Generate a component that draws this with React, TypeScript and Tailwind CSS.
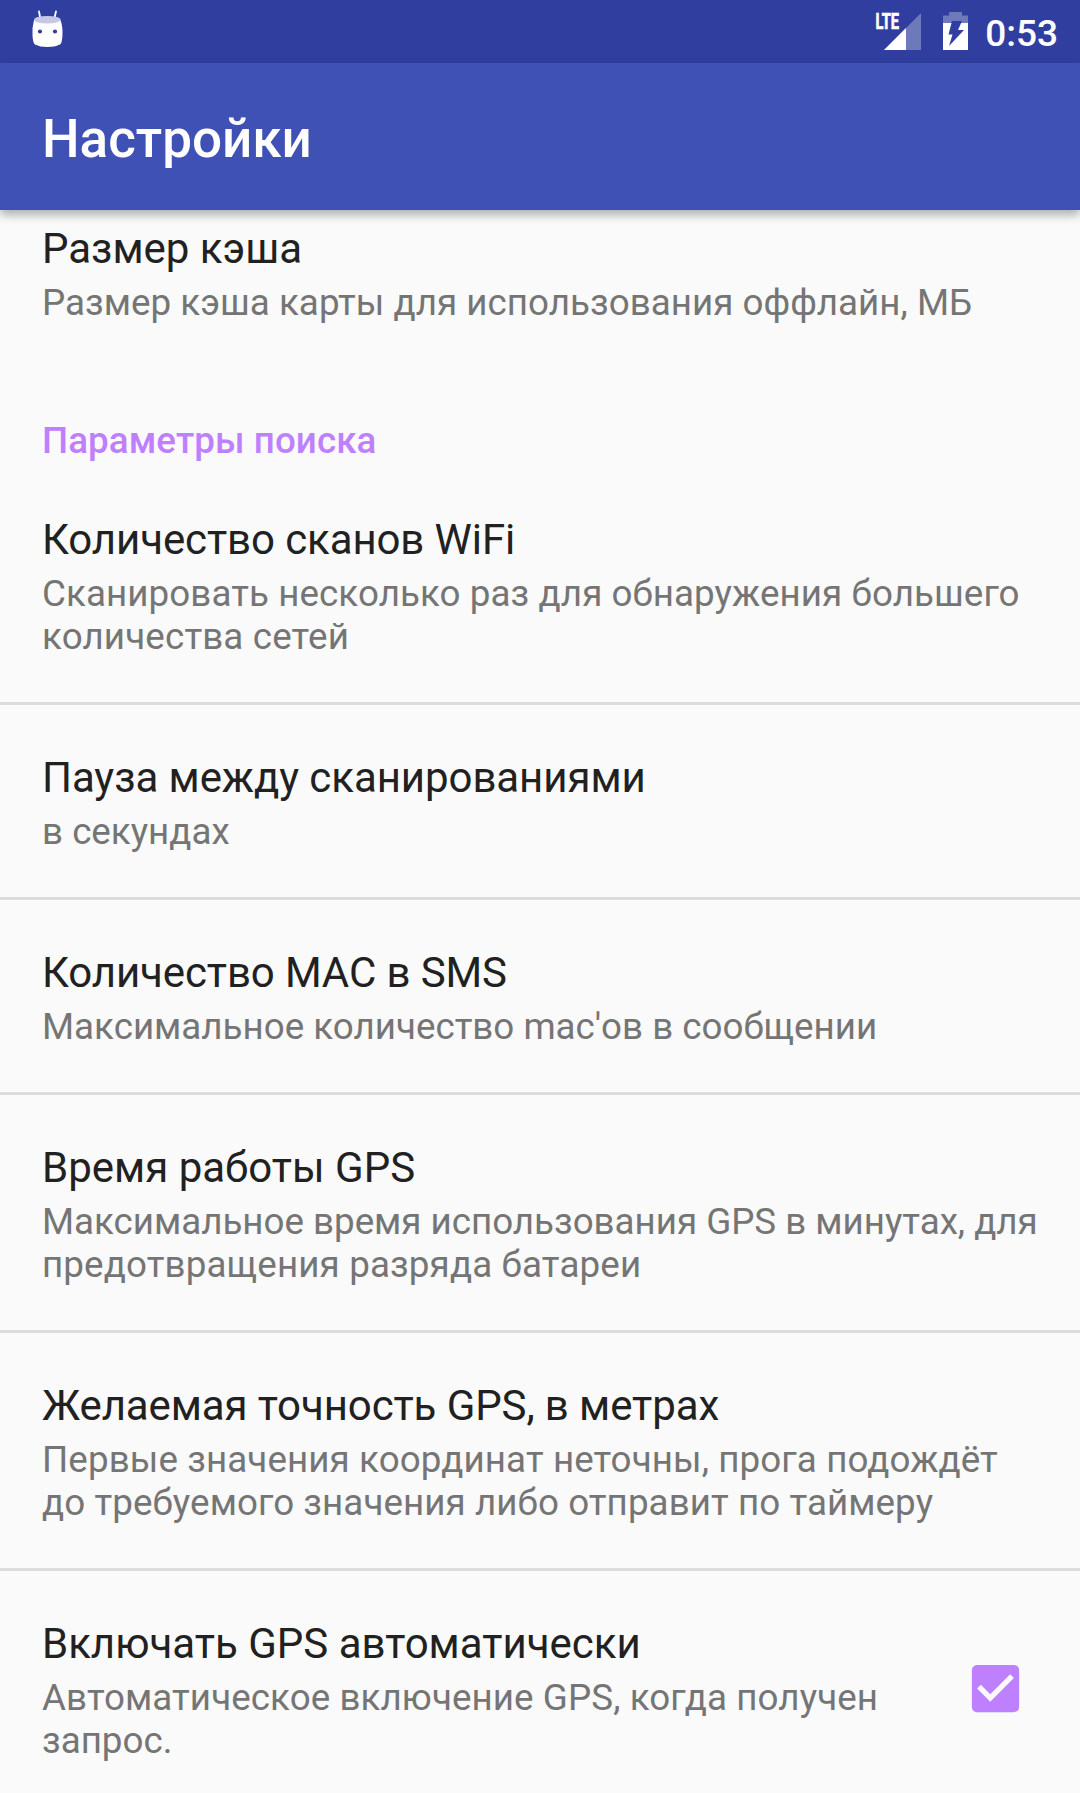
type Line = { text: string; tracking?: string };
type Pref = { title: Line; summary: Line[]; checked?: boolean };

const cachePref: Pref = {
  title: { text: "Размер кэша" },
  summary: [{ text: "Размер кэша карты для использования оффлайн, МБ", tracking: "tracking-[0.03px]" }],
};

const searchPrefs: Pref[] = [
  {
    title: { text: "Количество сканов WiFi", tracking: "tracking-[-0.1px]" },
    summary: [
      { text: "Сканировать несколько раз для обнаружения большего", tracking: "tracking-[0.08px]" },
      { text: "количества сетей", tracking: "tracking-[0.15px]" },
    ],
  },
  {
    title: { text: "Пауза между сканированиями", tracking: "tracking-[-0.07px]" },
    summary: [{ text: "в секундах" }],
  },
  {
    title: { text: "Количество MAC в SMS", tracking: "tracking-[-0.12px]" },
    summary: [{ text: "Максимальное количество mac'ов в сообщении" }],
  },
  {
    title: { text: "Время работы GPS" },
    summary: [
      { text: "Максимальное время использования GPS в минутах, для", tracking: "tracking-[-0.02px]" },
      { text: "предотвращения разряда батареи", tracking: "tracking-[0.13px]" },
    ],
  },
  {
    title: { text: "Желаемая точность GPS, в метрах", tracking: "tracking-[-0.1px]" },
    summary: [
      { text: "Первые значения координат неточны, прога подождёт", tracking: "tracking-[0.1px]" },
      { text: "до требуемого значения либо отправит по таймеру", tracking: "tracking-[0.07px]" },
    ],
  },
  {
    title: { text: "Включать GPS автоматически" },
    summary: [
      { text: "Автоматическое включение GPS, когда получен", tracking: "tracking-[0.08px]" },
      { text: "запрос." },
    ],
    checked: true,
  },
];

function PrefText({ pref }: { pref: Pref }) {
  return (
    <div className="flex flex-col gap-2 whitespace-nowrap">
      <h2 className="text-[42px] leading-[49px] text-[#212121]">
        <span className={pref.title.tracking}>{pref.title.text}</span>
      </h2>
      <div className="text-[36.75px] leading-[43px] text-[#757575]">
        {pref.summary.map((line) => (
          <p key={line.text} className={line.tracking}>
            {line.text}
          </p>
        ))}
      </div>
    </div>
  );
}

function Checkbox() {
  return (
    <svg className="mb-[5px] size-[63px] shrink-0" viewBox="0 0 24 24" fill="#bf80ff">
      <path d="M19 3H5c-1.11 0-2 .9-2 2v14c0 1.1.89 2 2 2h14c1.11 0 2-.9 2-2V5c0-1.1-.89-2-2-2zm-9 14l-5-5 1.41-1.41L10 14.17l7.59-7.59L19 8l-9 9z" />
    </svg>
  );
}

function StatusBar() {
  return (
    <div className="flex h-[63px] shrink-0 items-start bg-[#303f9f] text-white">
      <svg className="ml-[31px] mt-[10px] h-[38px] w-[33px]" viewBox="0 0 33 38" fill="#fff">
        <path d="M8 1.5 9.4 9M25 1.5 23.2 9" stroke="#fff" strokeWidth="1.8" strokeLinecap="round" />
        <path d="M3 10Q1 17 1.5 26Q2 33 4 34.5Q9 37 16.3 37Q24 37 29 34.5Q31 33 31.4 26Q32 17 29.5 10Z" />
        <ellipse cx="16.3" cy="9.8" rx="13.3" ry="3.8" fill="#c5c9e6" />
        <circle cx="9" cy="21.5" r="2.1" fill="#303f9f" />
        <circle cx="24" cy="21.5" r="2.1" fill="#303f9f" />
      </svg>
      <div className="grow" />
      <svg className="h-[50px] w-[49px]" viewBox="-2 -12 49 50">
        <path d="M46 1V38H9Z" fill="#fff" opacity=".3" />
        <path d="M31 16V38H9Z" fill="#fff" />
        <path d="M0 0H24.5V18H0Z" fill="#303f9f" />
        <text
          x="0.5"
          y="17"
          fill="#fff"
          stroke="#fff"
          strokeWidth="0.7"
          fontSize="22"
          fontWeight="700"
          textLength="23.5"
          lengthAdjust="spacingAndGlyphs"
          fontFamily="Roboto, sans-serif"
        >
          LTE
        </text>
      </svg>
      <svg className="ml-[21px] mt-[12px] h-[38px] w-[25px]" viewBox="0 0 25 38">
        <path d="M6 0H19V3.5H25V11H0V3.5H6Z" fill="#fff" opacity=".3" />
        <path d="M0 11H25V38H0Z" fill="#fff" />
        <path d="M9 9H19L15 18H21L6 34L9.5 22.5H5.5Z" fill="#303f9f" />
      </svg>
      <span className="ml-[17px] mr-[22px] mt-[12px] text-[37px] font-medium leading-[43px]">0:53</span>
    </div>
  );
}

export default function App() {
  return (
    <div className="flex h-[1793px] w-[1080px] flex-col overflow-hidden bg-[#fafafa] font-['Roboto',sans-serif]">
      <StatusBar />
      <header className="z-10 flex h-[147px] shrink-0 items-center bg-[#3f51b5] px-[42px] pt-[4px] shadow-[0_5px_9px_rgba(0,0,0,0.3)]">
        <h1 className="text-[53px] font-medium leading-[62px] text-white">Настройки</h1>
      </header>
      <main className="flex flex-col">
        <section className="h-[158px] px-[42px] pt-[14px]">
          <PrefText pref={cachePref} />
        </section>
        <h3 className="h-[99px] px-[42px] pt-[51px] text-[36.75px] font-medium leading-[43px] tracking-[0.08px] text-[#bf80ff]">
          Параметры поиска
        </h3>
        <ul className="divide-y-[3px] divide-[#dcdcdc]">
          {searchPrefs.map((pref) => (
            <li
              key={pref.title.text}
              className="flex items-center justify-between pb-[44px] pl-[42px] pr-[53px] pt-[48px]"
            >
              <PrefText pref={pref} />
              {pref.checked && <Checkbox />}
            </li>
          ))}
        </ul>
      </main>
    </div>
  );
}
